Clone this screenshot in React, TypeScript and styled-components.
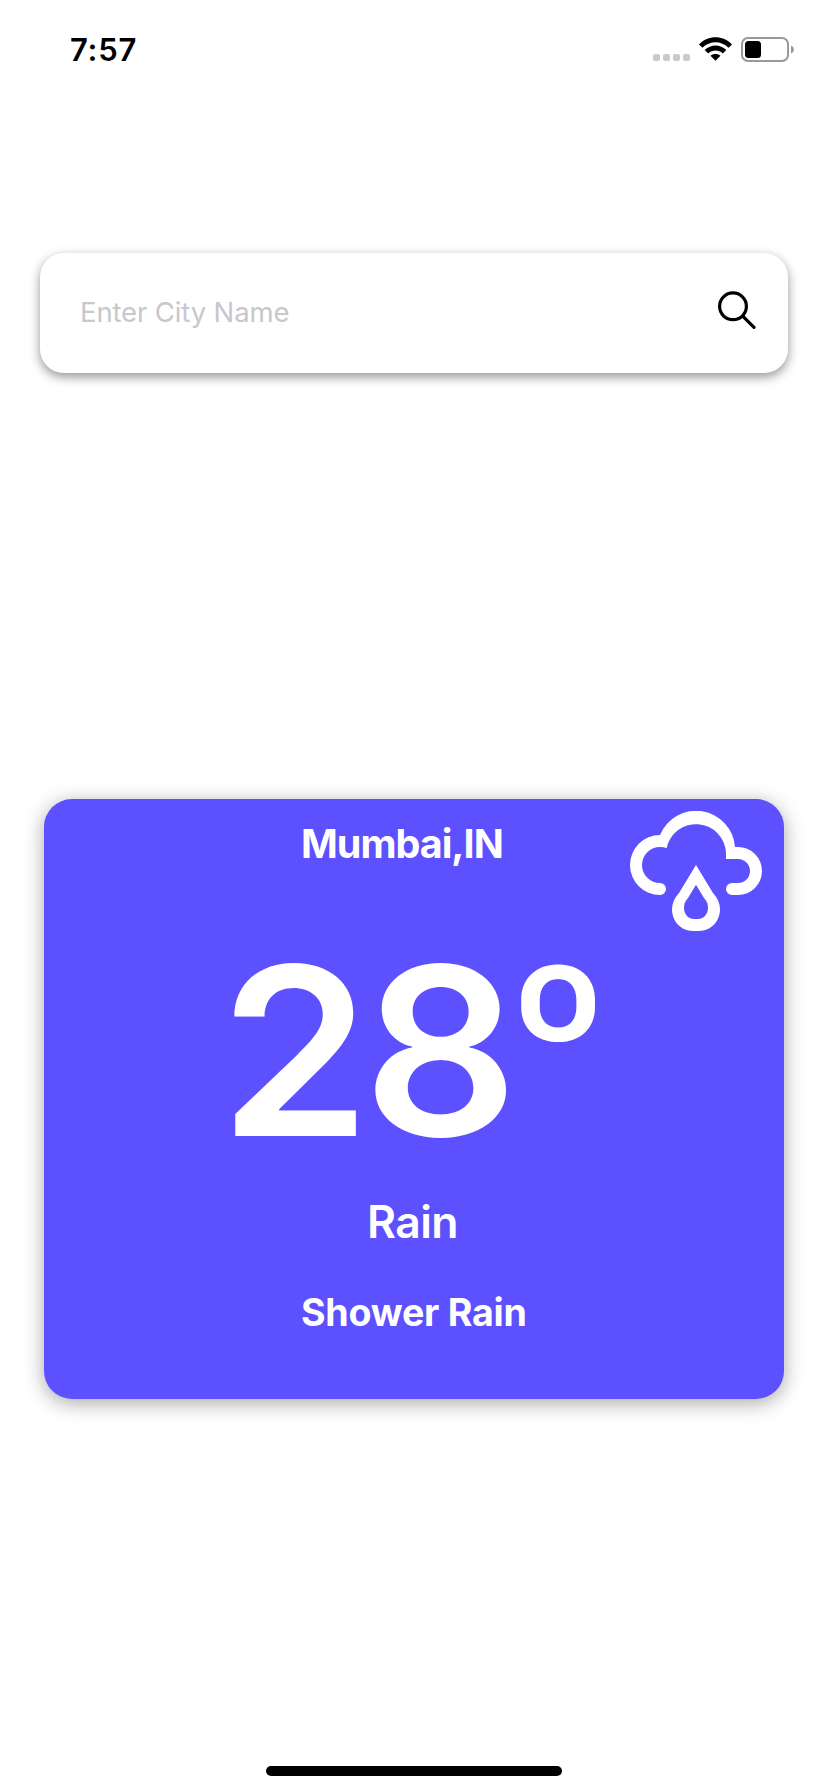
import React from "react";
import styled, { createGlobalStyle } from "styled-components";

const GlobalStyle = createGlobalStyle`
  * { box-sizing: border-box; }
  body { margin: 0; background: #fff; }
`;

const Screen = styled.main`
  width: 828px;
  height: 1792px;
  display: flex;
  flex-direction: column;
  background: #fff;
  font-family: Inter, "Liberation Sans", sans-serif;
  overflow: hidden;
`;

const StatusBar = styled.header`
  height: 88px;
  padding: 30px 34px 0 70px;
  display: flex;
  justify-content: space-between;
  align-items: flex-start;
`;

const Clock = styled.time`
  font-size: 31px;
  font-weight: 600;
  line-height: 40px;
  letter-spacing: 0.8px;
  color: #000;
`;

const StatusIcons = styled.div`
  display: flex;
  align-items: flex-end;
  padding-top: 7px;
`;

const SignalDots = styled.div`
  display: flex;
  gap: 3px;
  margin: 0 9px 1px 0;
`;

const Dot = styled.span`
  width: 7px;
  height: 7px;
  border-radius: 2px;
  background: #cacaca;
`;

const WifiIcon = styled.svg`
  width: 33px;
  height: 24px;
  margin: 0 9px 1px 0;
`;

const BatteryIcon = styled.svg`
  width: 53px;
  height: 25px;
`;

const SearchBar = styled.form`
  height: 120px;
  margin: 165px 40px 0;
  padding: 0 32px 0 40px;
  display: flex;
  align-items: center;
  border-radius: 24px;
  background: #fff;
  box-shadow: 0 4px 11px rgba(0, 0, 0, 0.42);
`;

const CityInput = styled.input`
  flex: 1;
  min-width: 0;
  height: 60px;
  margin-bottom: 2px;
  padding: 0;
  border: 0;
  outline: 0;
  background: transparent;
  font: 400 27.5px Inter, "Liberation Sans", sans-serif;
  letter-spacing: -0.14px;
  color: #000;
  &::placeholder { color: #c7c7cc; opacity: 1; }
`;

const SearchButton = styled.button`
  width: 40px;
  height: 40px;
  margin-bottom: 8px;
  padding: 0;
  border: 0;
  background: none;
  svg { display: block; width: 40px; height: 40px; }
`;

const WeatherCard = styled.section`
  width: 740px;
  height: 600px;
  margin: 426px auto 0;
  display: flex;
  flex-direction: column;
  border-radius: 28px;
  background: #5c50ff;
  color: #fff;
  box-shadow: 0 4px 20px rgba(0, 0, 0, 0.35);
`;

const CardHeader = styled.div`
  height: 132px;
  padding: 12px 22px 0 257px;
  display: flex;
  justify-content: space-between;
  align-items: flex-start;
`;

const City = styled.h1`
  margin: 9px 0 0;
  font-size: 39.5px;
  font-weight: 700;
  line-height: 48px;
  letter-spacing: -1px;
`;

const RainIcon = styled.svg`
  width: 132px;
  height: 120px;
`;

const Temperature = styled.div`
  height: 240px;
  padding-left: 176px;
  font-size: 235px;
  font-weight: 600;
  line-height: 240px;
  letter-spacing: -7px;
  white-space: nowrap;
  transform-origin: 190px 0;
  transform: scaleX(1.03);
`;

const DegreeSign = styled.span`
  display: inline-block;
  margin-left: -4px;
  font-size: 202px;
  font-weight: 700;
  line-height: 1;
  letter-spacing: 0;
  transform-origin: left bottom;
  transform: translateY(-26px) scaleX(1.02);
`;

const Condition = styled.p`
  margin: 24px 0 0;
  padding-left: 323px;
  font-size: 44.5px;
  font-weight: 600;
  line-height: 54px;
  letter-spacing: -0.6px;
`;

const Description = styled.p`
  margin: 41px 0 0;
  padding-left: 257px;
  font-size: 37.6px;
  font-weight: 700;
  line-height: 46px;
  letter-spacing: -0.25px;
`;

const HomeIndicator = styled.div`
  width: 296px;
  height: 10px;
  margin: auto auto 16px;
  border-radius: 5px;
  background: #000;
`;

export default function App() {
  return (
    <>
      <GlobalStyle />
      <Screen>
        <StatusBar>
          <Clock>7:57</Clock>
          <StatusIcons>
            <SignalDots>
              <Dot /><Dot /><Dot /><Dot />
            </SignalDots>
            <WifiIcon viewBox="0 0 33 24">
              <path d="M0 7.4C9-2 24-2 33 7.4L29.6 10.8C22 3.4 11 3.4 3.4 10.8Z" />
              <path d="M5.7 13C12 7 21 7 27.3 13L23.8 16.4C19.6 12.6 13.4 12.6 9.2 16.4Z" />
              <path d="M11.5 18.8C14.4 16.3 18.6 16.3 21.5 18.8L16.5 23.8Z" />
            </WifiIcon>
            <BatteryIcon viewBox="0 0 53 25">
              <rect x="1" y="1" width="46" height="23" rx="6" fill="none" stroke="#999" strokeWidth="2" />
              <rect x="4" y="4" width="16" height="17" rx="3.5" />
              <path d="M50 8.5C53.8 9.8 53.8 15.2 50 16.5Z" fill="#999" />
            </BatteryIcon>
          </StatusIcons>
        </StatusBar>

        <SearchBar onSubmit={(e) => e.preventDefault()}>
          <CityInput placeholder="Enter City Name" aria-label="City" />
          <SearchButton aria-label="Search">
            <svg viewBox="0 0 40 40" fill="none" stroke="#000" strokeWidth="3.2" strokeLinecap="round">
              <circle cx="17" cy="17.3" r="13.4" />
              <path d="M27 27.3L38 38.3" />
            </svg>
          </SearchButton>
        </SearchBar>

        <WeatherCard>
          <CardHeader>
            <City>Mumbai,IN</City>
            <RainIcon viewBox="90 93 396 360" fill="#fff">
              <path d="M180 165A117 117 0 0 1 405 201H414A72 72 0 0 1 414 345H396A18 18 0 0 1 396 309H414A36 36 0 0 0 414 237H378V219A90 90 0 0 0 200 204Q190 201 180 201A54 54 0 0 0 180 309A18 18 0 0 1 180 345A90 90 0 0 1 180 165Z" />
              <path
                fillRule="evenodd"
                d="M288 255L339 339Q360 362 360 388C360 425 332 453 298 453H278C244 453 216 425 216 388Q216 362 237 339ZM288 314L264 354Q252 367 252 383C252 403 266 417 282 417H294C310 417 324 403 324 383Q324 367 312 354Z"
              />
            </RainIcon>
          </CardHeader>
          <Temperature>
            28<DegreeSign>º</DegreeSign>
          </Temperature>
          <Condition>Rain</Condition>
          <Description>Shower Rain</Description>
        </WeatherCard>
        <HomeIndicator />
      </Screen>
    </>
  );
}
